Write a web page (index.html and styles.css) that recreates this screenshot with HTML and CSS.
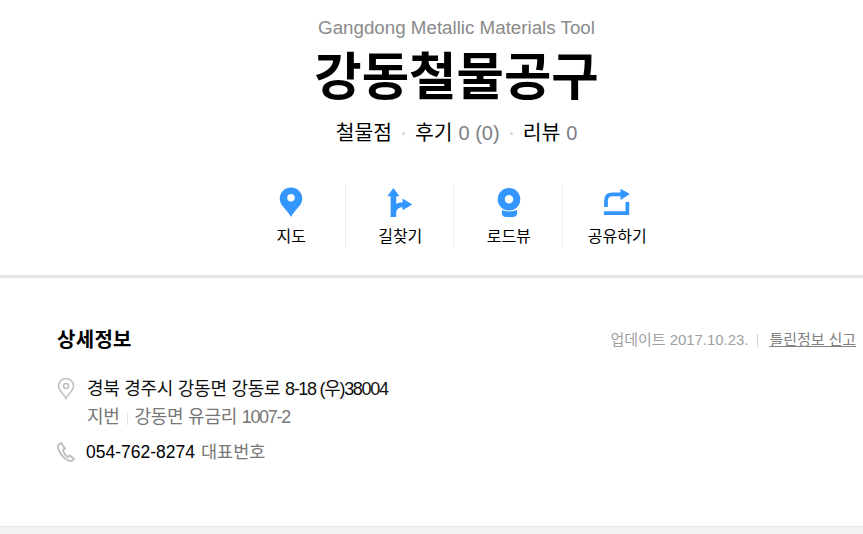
FILE: index.html
```html
<!DOCTYPE html>
<html lang="ko">
<head>
  <meta charset="UTF-8" />
  <meta name="viewport" content="width=device-width, initial-scale=1.0" />
  <title>강동철물공구</title>
  <link rel="stylesheet" href="styles.css">
</head>
<body>
  <header class="summary">
    <p class="name-en">Gangdong Metallic Materials Tool</p>
    <h1 class="name">강동철물공구</h1>
    <p class="meta">
      <span>철물점</span><i class="dot"></i><span>후기<em>0 (0)</em></span><i class="dot"></i><span>리뷰<em>0</em></span>
    </p>
    <nav class="actions">
      <a class="action" href="#">
        <svg class="action-icon" viewBox="0 0 36 34"><path fill-rule="evenodd" d="M18 33C15 26 6 21 6 13.5a12 12 0 0 1 24 0C30 21 21 26 18 33ZM18 8.500a4 4 0 1 0 0 8a4 4 0 0 0 0-8Z"/></svg>
        <span>지도</span>
      </a>
      <a class="action" href="#">
        <svg class="action-icon" viewBox="0 0 36 34"><path d="M11 2 17.500 11H14V33H8V11H4.500Z"/><path class="line thin" d="M11 30C11 23 15 19.700 22 19.700"/><path d="M20.700 13.300 31 19.700 20.700 25.700Z"/></svg>
        <span>길찾기</span>
      </a>
      <a class="action" href="#">
        <svg class="action-icon" viewBox="0 0 36 34"><path fill-rule="evenodd" d="M18 2a12 12 0 1 0 0 24a12 12 0 0 0 0-24ZM18 9.500a4.500 4.500 0 1 1 0 9a4.500 4.500 0 0 1 0-9Z"/><path d="M10.500 25.500C14 27.500 22 27.500 26.500 25.500V29Q26.500 33 22 33H15Q10.500 33 10.500 29Z"/></svg>
        <span>로드뷰</span>
      </a>
      <a class="action" href="#">
        <svg class="action-icon" viewBox="0 0 36 34"><path class="line" d="M6.300 22.300V16Q6.300 9 13 9H23"/><path class="line" d="M4 28.700H29V17"/><path d="M21.700 3 31.700 8.500 21.700 15Z"/></svg>
        <span>공유하기</span>
      </a>
    </nav>
  </header>

  <section class="detail">
    <div class="detail-head">
      <h2>상세정보</h2>
      <p class="update">업데이트 2017.10.23.<i class="bar"></i><a href="#">틀린정보 신고</a></p>
    </div>
    <div class="row">
      <svg class="row-icon" viewBox="0 0 18 22"><path class="outline" d="M9 20.500C7 16 1.500 12.500 1.500 8a7.500 7.500 0 0 1 15 0C16.500 12.500 11 16 9 20.500Z"/><circle class="outline" cx="9" cy="8" r="2.500"/></svg>
      <div class="address">
        <p>경북 경주시 강동면 강동로 <span class="num">8-18 (우)38004</span></p>
        <p class="jibun">지번<i class="bar small"></i>강동면 유금리 <span class="num">1007-2</span></p>
      </div>
    </div>
    <div class="row phone-row">
      <svg class="row-icon" viewBox="0 0 18 20"><path class="phone" d="M4 1 1.500 3C0.500 4 1 6.500 2.500 9.500C5 14.500 10 19 13.500 19C15 19 16 18.500 17 17L13 13.500 11 15C9 14.500 6.500 10.500 6 8L8 6.500Z"/></svg>
      <p class="tel-line"><span>054-762-8274</span><span class="tel-note">대표번호</span></p>
    </div>
  </section>

  <div class="next-band"></div>
</body>
</html>
```

FILE: styles.css
```css
* { box-sizing: border-box; }
html, body { margin: 0; padding: 0; }
body { width: 863px; height: 534px; overflow: hidden; background: #fff; color: #000; font-family: "Liberation Sans", "Noto Sans CJK KR", sans-serif; }
p, h1, h2 { margin: 0; }
a { color: inherit; text-decoration: none; }
em { font-style: normal; color: #7b8186; margin-left: 6px; }
i { font-style: normal; }

.summary { height: 278px; padding: 16px 0 0 50px; text-align: center; border-bottom: 3px solid #e4e4e4; }
.name-en { font-size: 18.750px; line-height: 24px; color: #8a8a8a; }
.name { font-size: 51.500px; line-height: 60px; font-weight: 700; margin-top: 7px; }
.meta { display: flex; justify-content: center; align-items: center; gap: 10px; font-size: 20.400px; line-height: 28px; margin-top: 12px; }
.meta em { font-size: 20px; }
.dot { width: 3px; height: 3px; border-radius: 50%; background: #d5d5d5; }

.actions { display: flex; justify-content: center; margin: 37px 0 0 -7px; }
.action { display: flex; flex-direction: column; align-items: center; width: 108.500px; height: 64px; padding: 2px 0 0 2px; border-left: 1px solid #eee; font-size: 16px; line-height: 22px; }
.action:first-child { border-left: 0; }
.action-icon { display: block; width: 36px; height: 34px; margin-bottom: 8px; fill: #3396ff; }
.action-icon .line { fill: none; stroke: #3396ff; stroke-width: 4; }
.action-icon .line.thin { stroke-width: 5; }

.detail { padding: 46px 7px 0 57px; }
.detail-head { display: flex; justify-content: space-between; align-items: center; height: 28px; }
.detail-head h2 { font-size: 20px; font-weight: 700; letter-spacing: 0.300px; }
.update { font-size: 15px; color: #a0a0a0; letter-spacing: -0.050px; }
.update a { color: #808080; text-decoration: underline; }
.bar { display: inline-block; width: 1px; height: 13px; margin: 0 11px 0 9px; background: #d5d5d5; vertical-align: -2px; }
.bar.small { height: 12px; margin: 0 7px; background: #e2e2e2; }

.row { display: flex; align-items: flex-start; margin-top: 23px; font-size: 18px; line-height: 28px; }
.row-icon { width: 18px; height: 22px; margin-top: 3px; flex: none; }
.outline { fill: none; stroke: #bdbdbd; stroke-width: 1.500; }
.phone { fill: none; stroke: #bdbdbd; stroke-width: 1.800; }
.address { margin-left: 12px; letter-spacing: -0.280px; color: #111; }
.num { letter-spacing: -1.300px; }
.jibun { color: #777; }
.phone-row { margin-top: 7px; }
.phone-row .row-icon { height: 20px; margin-top: 4px; }
.tel-line { margin-left: 11px; font-size: 17.500px; }
.tel-note { color: #777; margin-left: 6px; }

.next-band { height: 8px; margin-top: 60px; background: #f2f2f2; border-top: 1px solid #e5e5e5; }
```
